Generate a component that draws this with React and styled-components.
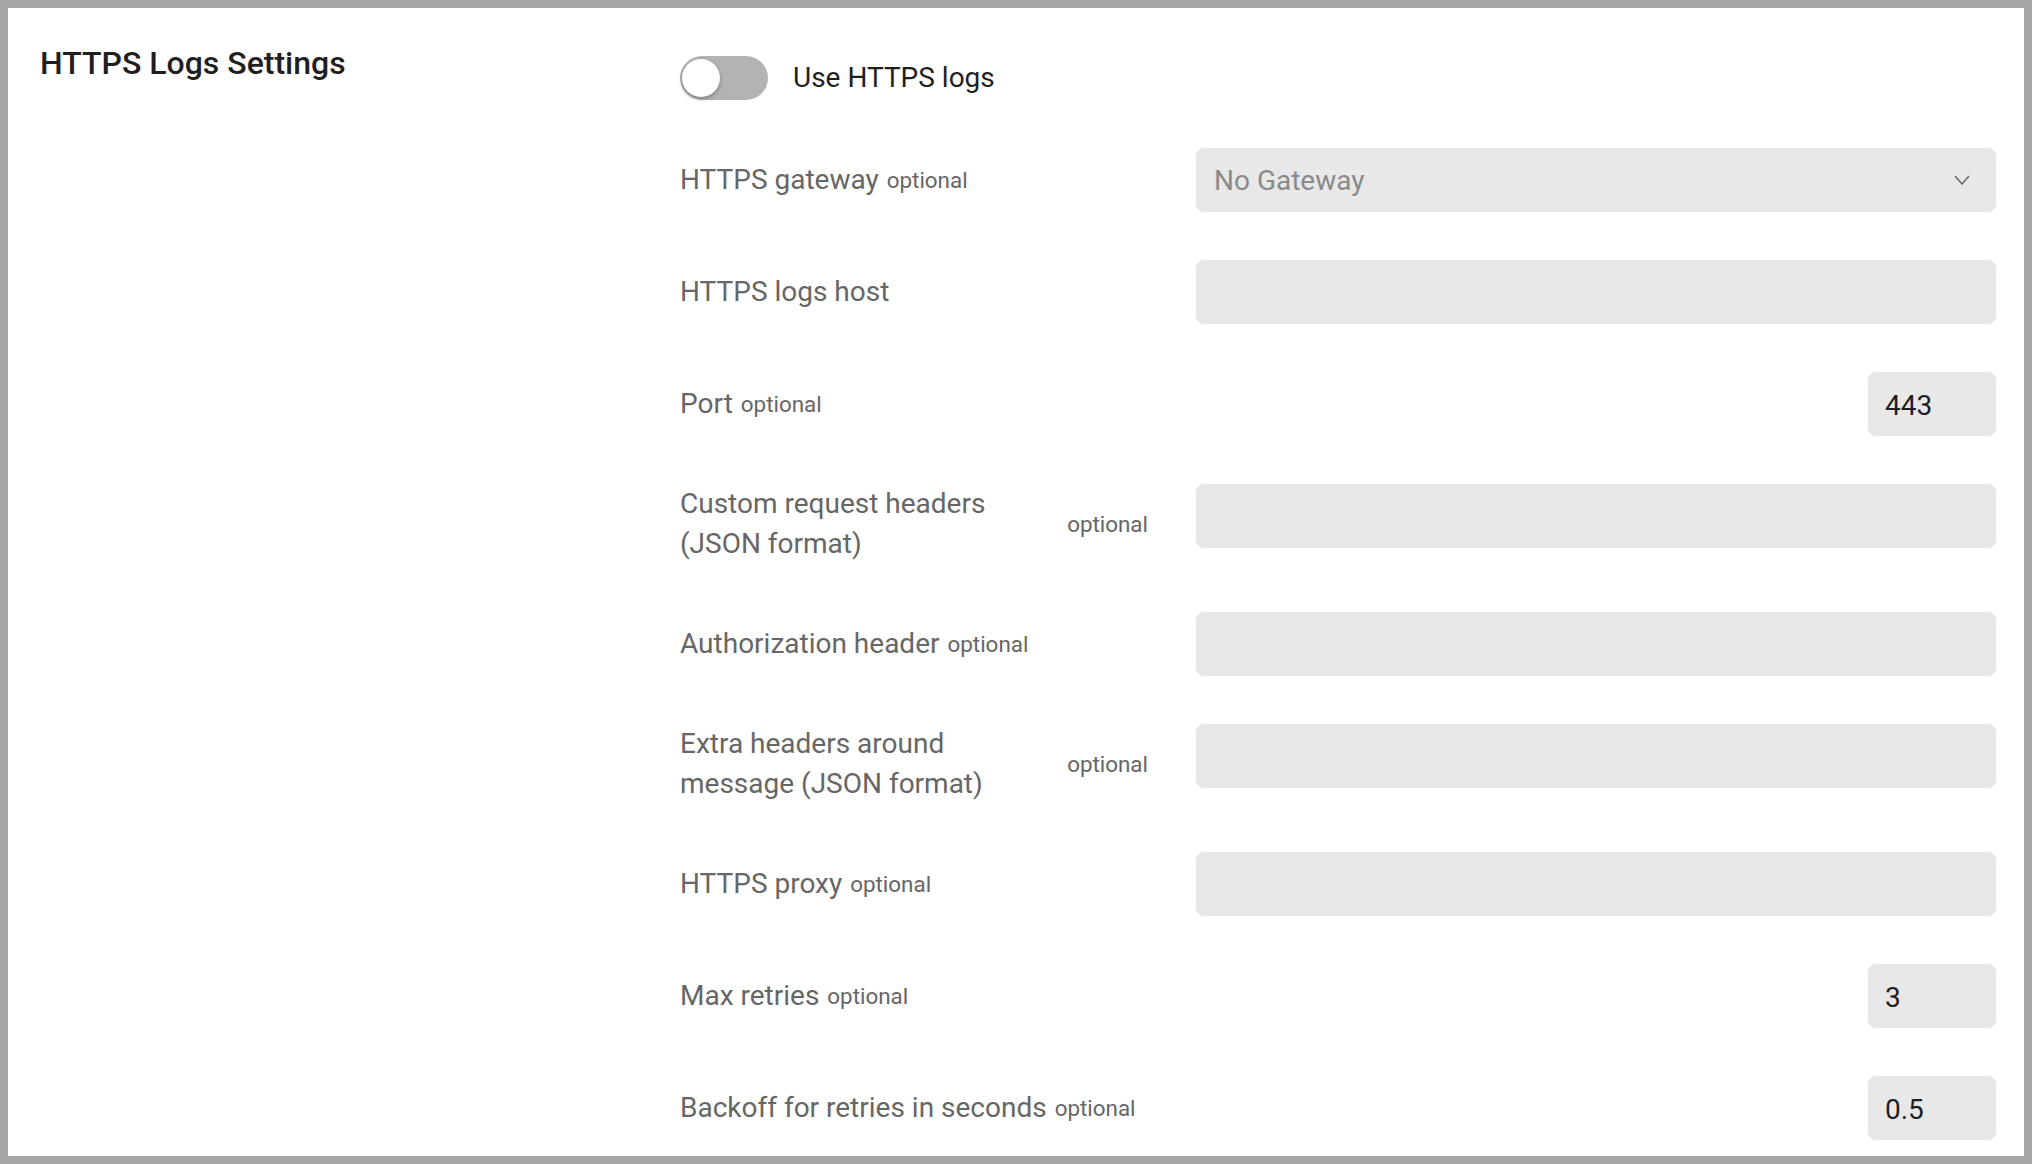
import React from 'react';
import styled, { createGlobalStyle } from 'styled-components';

const GlobalStyle = createGlobalStyle`
  html, body {
    margin: 0;
    padding: 0;
    background: #fff;
  }
  body {
    font-family: Roboto, "Liberation Sans", sans-serif;
  }
  * {
    box-sizing: border-box;
  }
`;

const Frame = styled.div`
  height: 100vh;
  border: 8px solid #a6a6a6;
  background: #fff;
  overflow: hidden;
  display: grid;
  grid-template-columns: 672px 1fr;
  padding: 35px 28px 0 0;
`;

const Side = styled.div`
  padding-left: 32px;

  h2 {
    margin: 0;
    font-size: 32px;
    line-height: 40px;
    font-weight: 500;
    color: #1f1f1f;
  }
`;

const Fields = styled.div`
  display: flex;
  flex-direction: column;
  gap: 48px;
  padding-top: 13px;
`;

const ToggleRow = styled.label`
  display: flex;
  align-items: center;
  gap: 25px;
  font-size: 28px;
  line-height: 40px;
  color: #1f1f1f;
`;

const Track = styled.span`
  position: relative;
  width: 88px;
  height: 44px;
  border-radius: 22px;
  background: ${({ on }) => (on ? '#4caf50' : '#b3b3b3')};
  flex-shrink: 0;
`;

const Knob = styled.span`
  position: absolute;
  top: 3px;
  left: ${({ on }) => (on ? '47px' : '2px')};
  width: 38px;
  height: 38px;
  border-radius: 50%;
  background: #fff;
  box-shadow: 0 2px 4px rgba(0, 0, 0, 0.3);
`;

const Row = styled.div`
  display: grid;
  grid-template-columns: 468px 1fr;
  column-gap: 48px;
  align-items: start;
`;

const Label = styled.div`
  display: flex;
  align-items: center;
  gap: 8px;
  min-height: 64px;
  font-size: 28px;
  line-height: 40px;
  color: #666;
`;

const Optional = styled.span`
  flex-shrink: 0;
  font-size: 22.4px;
  color: #666;
`;

const Input = styled.input`
  width: ${({ narrow }) => (narrow ? '128px' : '100%')};
  justify-self: ${({ narrow }) => (narrow ? 'end' : 'stretch')};
  height: 64px;
  border: none;
  border-radius: 8px;
  background: #e8e8e8;
  padding: 2px 17px 0;
  font-family: Roboto, "Liberation Sans", sans-serif;
  font-size: 28px;
  color: #1f1f1f;
  outline: none;
`;

const Select = styled.div`
  height: 64px;
  border-radius: 8px;
  background: #e8e8e8;
  padding: 0 26px 0 18px;
  display: flex;
  align-items: center;
  justify-content: space-between;
  font-size: 28px;
  color: #8a8a8a;
`;

const fields = [
  { label: 'HTTPS logs host' },
  { label: 'Port', optional: true, value: '443', narrow: true },
  { label: 'Custom request headers (JSON format)', optional: true },
  { label: 'Authorization header', optional: true },
  { label: 'Extra headers around message (JSON format)', optional: true },
  { label: 'HTTPS proxy', optional: true },
  { label: 'Max retries', optional: true, value: '3', narrow: true },
  { label: 'Backoff for retries in seconds', optional: true, value: '0.5', narrow: true },
];

export default function App() {
  return (
    <>
      <GlobalStyle />
      <Frame>
        <Side>
          <h2>HTTPS Logs Settings</h2>
        </Side>
        <Fields>
          <ToggleRow>
            <Track>
              <Knob />
            </Track>
            Use HTTPS logs
          </ToggleRow>

          <Row>
            <Label>
              <span>HTTPS gateway</span>
              <Optional>optional</Optional>
            </Label>
            <Select>
              No Gateway
              <svg width="16" height="10" viewBox="0 0 16 10" fill="none">
                <path d="M1 1l7 8 7-8" stroke="#666" strokeWidth="1.5" />
              </svg>
            </Select>
          </Row>

          {fields.map((f) => (
            <Row key={f.label}>
              <Label>
                <span>{f.label}</span>
                {f.optional && <Optional>optional</Optional>}
              </Label>
              <Input narrow={f.narrow} defaultValue={f.value || ''} />
            </Row>
          ))}
        </Fields>
      </Frame>
    </>
  );
}
